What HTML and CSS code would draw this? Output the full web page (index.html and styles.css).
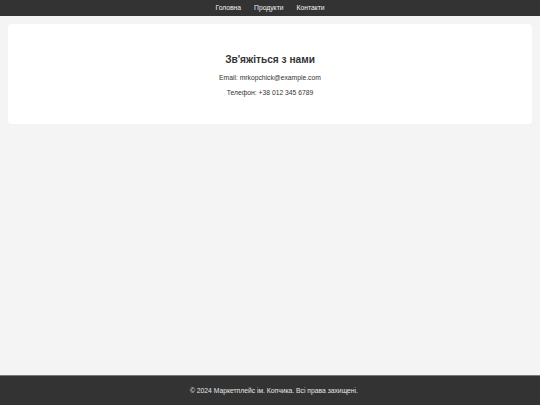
FILE: index.html
```html
<!DOCTYPE html>
<html lang="uk">
<head>
<meta charset="utf-8">
<title>Контакти</title>
<link rel="stylesheet" href="styles.css">
</head>
<body>
<header class="site-header">
  <nav class="nav">
    <a href="#" class="nav-link">Головна</a>
    <a href="#" class="nav-link">Продукти</a>
    <a href="#" class="nav-link">Контакти</a>
  </nav>
</header>
<main class="main">
  <section class="card">
    <h2 class="card-title">Зв'яжіться з нами</h2>
    <p class="card-text">Email: mrkopchick@example.com</p>
    <p class="card-text">Телефон: +38 012 345 6789</p>
  </section>
</main>
<footer class="site-footer">
  <p class="footer-text">© 2024 Маркетплейс ім. Копчика. Всі права захищені.</p>
</footer>
</body>
</html>
```
FILE: styles.css
```css
html, body {
  margin: 0;
  padding: 0;
}
body {
  font-family: "Liberation Sans", Arial, sans-serif;
  background: #f4f4f4;
  color: #333;
  min-height: 100vh;
  display: flex;
  flex-direction: column;
}
.site-header {
  background: #333;
  height: 16px;
  display: flex;
  align-items: center;
  justify-content: center;
}
.nav {
  display: flex;
  gap: 13px;
}
.nav-link {
  color: #f2f2f2;
  text-decoration: none;
  font-size: 6.75px;
  line-height: 16px;
}
.main {
  flex: 1;
  padding: 8px 8px 0;
}
.card {
  background: #fff;
  border-radius: 4px;
  padding: 29px 10px 24px;
  text-align: center;
}
.card-title {
  margin: 0 0 3px;
  font-size: 10.15px;
  line-height: 14px;
  font-weight: bold;
  color: #333;
}
.card-text {
  margin: 0;
  font-size: 6.75px;
  line-height: 15px;
  color: #333;
}
.site-footer {
  background: #333;
  border-top: 1px solid #777;
  height: 29px;
  display: flex;
  align-items: center;
  justify-content: center;
}
.footer-text {
  margin: 0;
  padding-left: 8px;
  color: #e6e6e6;
  font-size: 6.75px;
}
```
